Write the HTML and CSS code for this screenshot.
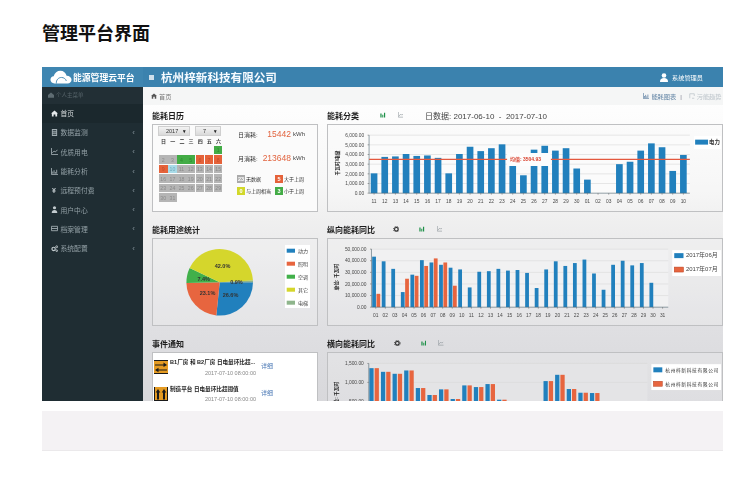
FILE: index.html
```html
<!DOCTYPE html>
<html lang="zh-CN">
<head>
<meta charset="utf-8">
<title>管理平台界面</title>
<link rel="stylesheet" href="styles.css">
</head>
<body>
<h1 class="page-title">管理平台界面</h1>
<div class="shot">
  <header class="topbar">
    <div class="brand">
      <svg class="cloud" viewBox="0 0 24 15"><path d="M5 14.5C2 14.5 .5 12.7 .5 10.6 .5 8.5 2 7 4 6.8 5 3 8 .8 11.3 .8c3.5 0 6 2.300 6.800 5.200 3.200 0 5.400 2 5.400 4.500 0 2.300-1.800 4-4.300 4z" fill="#fff"/><path d="M7 14.500c-.5-3.500 2-6.500 5.500-6.500 2.600 0 4.600 1.500 5.300 3.800" fill="none" stroke="#3d84af" stroke-width="1"/></svg>
      <span>能源管理云平台</span>
    </div>
    <div class="topbar-main">
      <span class="burger"></span>
      <span class="company">杭州梓新科技有限公司</span>
      <span class="user">
        <svg class="user-icon" viewBox="0 0 8 9"><circle cx="4" cy="2.500" r="2.300" fill="#fff"/><path d="M0 9c0-3 1.500-4 4-4s4 1 4 4z" fill="#fff"/></svg>
        系统管理员
      </span>
    </div>
  </header>
  <div class="body-row">
    <nav class="sidebar">
      <div class="side-head">
        <svg class="nav-icon small" viewBox="0 0 8 8"><path d="M0 4 4 .5 8 4v3.500H0z" fill="#5e6c72"/></svg>
        个人主菜单
      </div>
      <a class="nav-item active"><svg class="nav-icon" viewBox="0 0 8 8"><path d="M0 4 4 .5 8 4H7v3.500H5V5H3v2.500H1V4z" fill="#e4e8ea"/></svg><span>首页</span></a>
      <a class="nav-item"><svg class="nav-icon" viewBox="0 0 8 8"><path d="M1 0h6v8H1zM2 1.500v1h4v-1zM2 4v.8h4V4zm0 2v.8h4V6z" fill="#a3aeb3" fill-rule="evenodd"/></svg><span>数据监测</span><i class="chev">‹</i></a>
      <a class="nav-item"><svg class="nav-icon" viewBox="0 0 8 8"><path d="M.5 0v7.500H8M1.500 5.500l2-2 1.500 1L7.500 2" fill="none" stroke="#a3aeb3"/></svg><span>优质用电</span><i class="chev">‹</i></a>
      <a class="nav-item"><svg class="nav-icon" viewBox="0 0 8 8"><path d="M.5 0v7.500H8M2 6.500V4M3.500 6.500V2.500M5 6.500V4.500M6.500 6.500V2" fill="none" stroke="#a3aeb3"/></svg><span>能耗分析</span><i class="chev">‹</i></a>
      <a class="nav-item"><span class="yen">¥</span><span>远程预付费</span><i class="chev">‹</i></a>
      <a class="nav-item"><svg class="nav-icon" viewBox="0 0 8 8"><circle cx="4" cy="2" r="1.800" fill="#c3cbcf"/><path d="M.8 8c0-2.500 1.200-3.500 3.200-3.500S7.200 5.500 7.200 8z" fill="#c3cbcf"/></svg><span>用户中心</span><i class="chev">‹</i></a>
      <a class="nav-item"><svg class="nav-icon" viewBox="0 0 8 8"><path d="M.5 1.500h7v5h-7zM.5 4h7" fill="none" stroke="#a3aeb3"/></svg><span>档案管理</span><i class="chev">‹</i></a>
      <a class="nav-item"><svg class="nav-icon" viewBox="0 0 8 8"><circle cx="3" cy="4.500" r="1.900" fill="none" stroke="#c3cbcf" stroke-width="1.300"/><circle cx="6.500" cy="2" r="1.100" fill="none" stroke="#c3cbcf"/><circle cx="6.500" cy="6.500" r="1" fill="none" stroke="#c3cbcf"/></svg><span>系统配置</span><i class="chev">‹</i></a>
    </nav>
    <main class="content">
      <div class="crumbs">
        <span class="crumb-home"><svg class="crumb-icon" viewBox="0 0 8 8"><path d="M0 4 4 .5 8 4H7v3.500H5V5H3v2.500H1V4z" fill="#555"/></svg>首页</span>
        <span class="crumb-tools">
          <svg class="crumb-icon" viewBox="0 0 8 8"><path d="M.5 0v7.500H8M2 6.500V4M3.500 6.500V2.500M5 6.500V4.500M6.500 6.500V2" fill="none" stroke="#5f82a3"/></svg>
          <span class="tool-on">能耗图表</span><span class="tool-sep">|</span>
          <svg class="crumb-icon" viewBox="0 0 8 8"><path d="M1 7V1h6v3M4 7h3" fill="none" stroke="#bcc4ca"/></svg>
          <span class="tool-off">污能趋势</span>
        </span>
      </div>
      <div class="board">
        <section class="sec">
          <div class="sec-head"><h2>能耗日历</h2></div>
          <div class="panel calendar-panel">
            <div class="cal">
              <div class="cal-selects">
                <span class="sel sel-year">2017<b>▾</b></span>
                <span class="sel sel-month">7<b>▾</b></span>
              </div>
              <div class="cal-week"><span>日</span><span>一</span><span>二</span><span>三</span><span>四</span><span>五</span><span>六</span></div>
              <div class="cal-grid">
                <span class="blank"></span><span class="blank"></span><span class="blank"></span><span class="blank"></span><span class="blank"></span><span class="blank"></span><span class="g">1</span>
                <span>2</span><span>3</span><span class="g">4</span><span class="g">5</span><span class="o">6</span><span class="o">7</span><span class="o">8</span>
                <span class="o">9</span><span class="today">10</span><span>11</span><span>12</span><span>13</span><span>14</span><span>15</span>
                <span>16</span><span>17</span><span>18</span><span>19</span><span>20</span><span>21</span><span>22</span>
                <span>23</span><span>24</span><span>25</span><span>26</span><span>27</span><span>28</span><span>29</span>
                <span>30</span><span>31</span>
              </div>
            </div>
            <div class="cal-side">
              <div class="stat"><span class="stat-label">日消耗:</span><span class="stat-val">15442</span><span class="stat-unit">kWh</span></div>
              <div class="stat"><span class="stat-label">月消耗:</span><span class="stat-val">213648</span><span class="stat-unit">kWh</span></div>
              <div class="keys">
                <span class="key"><b class="sw-gray">23</b>无数据</span>
                <span class="key"><b class="sw-orange">5</b>大于上周</span>
                <span class="key"><b class="sw-yellow">0</b>与上周相当</span>
                <span class="key"><b class="sw-green">3</b>小于上周</span>
              </div>
            </div>
          </div>
        </section>
        <section class="sec">
          <div class="sec-head">
            <h2>能耗分类</h2>
            <svg class="ico ico-a" viewBox="0 0 8 8"><path d="M.5 8V2h1.800v6zM3.300 8V4h1.500v4zM5.800 8V1h1.700v7z" fill="#1f9149"/></svg>
            <svg class="ico ico-b" viewBox="0 0 8 8"><path d="M.5 0v7.500H8M1.500 6l2.500-3 1.500 1.500L7.500 3" fill="none" stroke="#8d969b" stroke-width=".9"/></svg>
            <span class="range">日数据: 2017-06-10 &nbsp;-&nbsp; 2017-07-10</span>
          </div>
          <div class="panel"><svg id="chart-type" class="chart" viewBox="328 125 396 86"></svg></div>
        </section>
        <section class="sec">
          <div class="sec-head"><h2>能耗用途统计</h2></div>
          <div class="panel"><svg id="chart-pie" class="chart" viewBox="153 239 164 86"></svg></div>
        </section>
        <section class="sec">
          <div class="sec-head">
            <h2>纵向能耗同比</h2>
            <svg class="gear gear-v" viewBox="0 0 10 10"><circle cx="5" cy="5" r="2.700" fill="none" stroke="#222" stroke-width="1.600"/><circle cx="5" cy="5" r="4.200" fill="none" stroke="#222" stroke-width="1.400" stroke-dasharray="1.600 1.700"/></svg>
            <svg class="ico ico-v" viewBox="0 0 8 8"><path d="M.5 8V2h1.800v6zM3.300 8V4h1.500v4zM5.800 8V1h1.700v7z" fill="#1f9149"/></svg>
            <svg class="ico ico-b" viewBox="0 0 8 8"><path d="M.5 0v7.500H8M1.500 6l2.500-3 1.500 1.500L7.500 3" fill="none" stroke="#8d969b" stroke-width=".9"/></svg>
          </div>
          <div class="panel"><svg id="chart-month" class="chart" viewBox="328 239 396 86"></svg></div>
        </section>
        <section class="sec">
          <div class="sec-head"><h2>事件通知</h2></div>
          <div class="panel events">
            <div class="event">
              <svg class="ev-icon" viewBox="0 0 14 14"><rect width="14" height="14" fill="#e59b22"/><path d="M0 .5h14M0 13.500h14" stroke="#1a1a1a"/><path d="M1 4.500h8.500V2.500L13 5 9.500 7V5.500H1zM13 9.500H4.500V7.800L1 10l3.500 2.300v-1.800H13z" fill="#1a1a1a"/></svg>
              <div class="ev-text"><b>B1厂房 和 B2厂房 日电量环比超...</b><time>2017-07-10 08:00:00</time></div>
              <a class="ev-link">详细</a>
            </div>
            <div class="event">
              <svg class="ev-icon" viewBox="0 0 14 14"><rect width="14" height="14" fill="#e59b22"/><path d="M.5 0v14M13.500 0v14M0 13.500h14" stroke="#1a1a1a"/><path d="M4 2 6.300 5.500H5v7H3v-7H1.700zM10 2l2.300 3.500H11v7H9v-7H7.700z" fill="#1a1a1a"/></svg>
              <div class="ev-text"><b>制造平台 日电量环比超阈值</b><time>2017-07-10 08:00:00</time></div>
              <a class="ev-link">详细</a>
            </div>
          </div>
        </section>
        <section class="sec">
          <div class="sec-head">
            <h2>横向能耗同比</h2>
            <svg class="gear gear-h" viewBox="0 0 10 10"><circle cx="5" cy="5" r="2.700" fill="none" stroke="#222" stroke-width="1.600"/><circle cx="5" cy="5" r="4.200" fill="none" stroke="#222" stroke-width="1.400" stroke-dasharray="1.600 1.700"/></svg>
            <svg class="ico ico-v" viewBox="0 0 8 8"><path d="M.5 8V2h1.800v6zM3.300 8V4h1.500v4zM5.800 8V1h1.700v7z" fill="#1f9149"/></svg>
            <svg class="ico ico-b" viewBox="0 0 8 8"><path d="M.5 0v7.500H8M1.500 6l2.500-3 1.500 1.500L7.500 3" fill="none" stroke="#8d969b" stroke-width=".9"/></svg>
          </div>
          <div class="panel"><svg id="chart-company" class="chart" viewBox="328 353 396 86"></svg></div>
        </section>
      </div>
    </main>
  </div>
</div>
<div class="footer-band"></div>
<script src="charts.js"></script>
</body>
</html>
```

FILE: styles.css
```css
* { box-sizing: border-box; }
html, body { margin: 0; padding: 0; }
body {
  background: #fff;
  width: 750px;
  height: 493px;
  overflow: hidden;
  padding: 23px 27px 0 42px;
  font-family: "Liberation Sans", "Noto Sans CJK SC", sans-serif;
}
.page-title {
  margin: 0 0 22px;
  font-size: 18px;
  line-height: 22px;
  font-weight: 700;
  color: #111;
}
.shot {
  width: 681px;
  height: 333.500px;
  overflow: hidden;
  background: #fff;
  filter: blur(.3px);
  display: flex;
  flex-direction: column;
}
.footer-band {
  margin-top: 10px;
  height: 40px;
  background: #f4f2f4;
  border-bottom: 1px solid #ebe9eb;
}

/* top bar */
.topbar { display: flex; height: 20px; flex: none; color: #fff; background: #3b82ae; }
.brand {
  width: 101px;
  display: flex;
  align-items: center;
  padding-left: 8px;
  background: #3f86b1;
  font-size: 8.800px;
  font-weight: 700;
}
.cloud { width: 22px; height: 14px; margin-right: 1px; flex: none; }
.topbar-main { flex: 1; display: flex; align-items: center; padding-left: 6px; }
.burger { width: 5px; height: 5px; background: #cfe0ec; margin-right: 7px; }
.company { font-size: 11.600px; font-weight: 700; color: #f6fbff; }
.user { margin-left: auto; margin-right: 20px; display: flex; align-items: center; font-size: 6.200px; color: #fff; }
.user-icon { width: 8px; height: 9px; margin-right: 4px; }

.body-row { flex: 1; display: flex; min-height: 0; }

/* sidebar */
.sidebar { width: 101px; flex: none; background: #1f2d33; color: #93a0a6; font-size: 6.800px; }
.side-head {
  height: 16.500px;
  display: flex;
  align-items: center;
  padding-left: 6px;
  font-size: 5.500px;
  color: #56646a;
  background: #222f35;
}
.nav-item { height: 19.300px; display: flex; align-items: center; padding-left: 8.500px; }
.nav-item.active { color: #d5dadc; background: #1b282d; }
.nav-icon { width: 7px; height: 7px; margin-right: 3px; flex: none; }
.nav-icon.small { width: 6px; height: 6px; margin-right: 2px; }
.yen { width: 7px; margin-right: 3px; text-align: center; color: #c3cbcf; font-size: 7px; font-weight: 700; }
.chev { margin-left: auto; margin-right: 8px; font-style: normal; font-size: 8px; color: #84929a; }

/* content */
.content {
  flex: 1;
  min-width: 0;
  display: flex;
  flex-direction: column;
  background: linear-gradient(#fff 0, #f7f7f7 30%, #f0f0f0 41%, #dfdfe2 77%, #d8d8db 100%);
}
.crumbs {
  height: 18px;
  flex: none;
  display: flex;
  align-items: center;
  justify-content: space-between;
  padding: 0 1.500px 0 8px;
  background: #f5f6f6;
  font-size: 6.200px;
  color: #777;
}
.crumb-home, .crumb-tools { display: flex; align-items: center; }
.crumb-icon { width: 6px; height: 6px; margin-right: 2px; flex: none; }
.tool-on { color: #5f82a3; }
.tool-sep { margin: 0 7px 0 4px; color: #778; }
.tool-off { color: #bcc4ca; }
.board {
  display: grid;
  grid-template-columns: 166px 396px;
  column-gap: 9px;
  row-gap: 8px;
  padding: 1px 0 0 9px;
  grid-auto-rows: 106px;
}
.sec { min-width: 0; }
.sec-head { height: 18px; display: flex; align-items: center; }
.sec-head h2 { margin: 0; font-size: 8px; font-weight: 700; color: #1c1c1c; }
.panel {
  height: 88px;
  border: 1px solid #bfc0c2;
  background: rgba(250, 250, 250, .2);
  overflow: hidden;
}
.chart { display: block; width: 100%; height: 100%; }
.ico { width: 5.500px; height: 5.500px; flex: none; }
.ico-a { margin-left: 21px; }
.ico-b { margin-left: 12px; }
.ico-v { margin-left: 20px; }
.gear { width: 6.700px; height: 6.700px; flex: none; margin-left: 17.500px; }
.gear-h { margin-left: 19px; }
.range { margin-left: 22px; font-size: 8px; color: #444; }

/* calendar */
.calendar-panel { display: flex; padding: 1px 0 0 5px; background: #fbfbfb; }
.cal { width: 64px; flex: none; }
.cal-selects { display: flex; height: 10px; gap: 5px; width: 63px; }
.sel {
  display: flex;
  align-items: center;
  justify-content: space-between;
  padding: 0 3px 0 7px;
  background: linear-gradient(#f3f3f3, #d9d9d9);
  border: 1px solid #cfcfcf;
  font-size: 5.500px;
  color: #333;
}
.sel b { font-size: 5px; color: #222; }
.sel-year { width: 32px; }
.sel-month { width: 26px; }
.cal-week { display: grid; grid-template-columns: repeat(7, 9.170px); height: 9.700px; margin-left: 1px; font-size: 5px; color: #333; align-items: center; justify-items: center; font-weight: 700; }
.cal-grid { display: grid; grid-template-columns: repeat(7, 8.500px); grid-auto-rows: 8.800px; column-gap: .670px; row-gap: .700px; margin-left: 1px; }
.cal-grid span { display: flex; align-items: center; justify-content: center; background: #b5b5b5; color: #8b8b8b; font-size: 5.200px; }
.cal-grid .blank { background: none; }
.cal-grid .g { background: #43ac46; color: #2d8c30; }
.cal-grid .o { background: #e5623a; color: #c44d29; }
.cal-grid .today { background: #a9dbe8; color: #6fa9b9; }
.cal-side { margin-left: 15px; width: 74px; padding-top: 1px; }
.stat { display: flex; align-items: center; height: 14px; width: 70px; margin-bottom: 10px; font-size: 6px; color: #333; }
.stat-label { flex: 1; padding-left: 1px; }
.stat-val { font-size: 8.500px; color: #e2643f; }
.stat-unit { width: 14px; margin-left: 2px; color: #444; }
.keys { display: grid; grid-template-columns: 38px 36px; grid-auto-rows: 9px; row-gap: 3px; margin-top: -1px; }
.key { display: flex; align-items: center; font-size: 5px; color: #333; white-space: nowrap; }
.key b { width: 8px; height: 8px; margin-right: 1px; display: flex; align-items: center; justify-content: center; font-size: 5.500px; color: #fff; flex: none; }
.sw-gray { background: #aaa; }
.sw-orange { background: #e5623a; }
.sw-yellow { background: #d2d82a; }
.sw-green { background: #43ac46; }

/* events */
.events { background: #fff; padding: 6px 2px 0 1px; }
.event { display: flex; height: 26.500px; align-items: flex-start; }
.ev-icon { width: 14px; height: 14px; margin-top: 1px; flex: none; }
.ev-text { width: 86px; margin-left: 2px; display: flex; flex-direction: column; margin-top: -1px; }
.ev-text b { font-size: 5.600px; line-height: 8px; color: #1d1d1d; white-space: nowrap; }
.ev-text time { font-size: 5.500px; line-height: 8px; margin-top: 2.500px; color: #888; text-align: right; }
.ev-link { margin: 2px 0 0 5px; font-size: 6px; color: #4a78b5; }

/* chart text */
.tick { font-size: 4.900px; fill: #4a4a4a; }
.axis-title { font-size: 4.800px; font-weight: 700; fill: #222; }
.legend-text { font-size: 5px; fill: #444; }
.legend-date { font-size: 6px; fill: #444; }
.legend-strong { font-size: 5.500px; font-weight: 700; fill: #333; }
.legend-spaced { font-size: 4.800px; letter-spacing: .6px; fill: #333; }
.avg-label { font-size: 5px; font-weight: 700; fill: #d9402c; }
.pie-label { font-size: 5.500px; font-weight: 700; fill: #333; text-anchor: middle; }
```

FILE: charts.js
```js
(function () {
  var NS = 'http://www.w3.org/2000/svg';
  var BLUE = '#2180bd', ORANGE = '#e7653f';

  function add(svg, tag, attrs, text) {
    var el = document.createElementNS(NS, tag);
    for (var k in attrs) el.setAttribute(k, attrs[k]);
    if (text != null) el.textContent = text;
    svg.appendChild(el);
    return el;
  }
  function money(v) {
    return v.toLocaleString('en-US', { minimumFractionDigits: 2, maximumFractionDigits: 2 });
  }
  function pad(n) { return (n < 10 ? '0' : '') + n; }

  function barChart(id, c) {
    var svg = document.getElementById(id);
    var yOf = function (v) { return c.y0 - v * c.scale; };
    var top = yOf(c.max);
    add(svg, 'rect', { x: c.x0, y: top, width: c.x1 - c.x0, height: c.y0 - top, fill: c.plot });
    for (var v = 0; v <= c.max; v += c.step) {
      var y = yOf(v);
      if (v) add(svg, 'line', { x1: c.x0, x2: c.x1, y1: y, y2: y, stroke: '#d9d9d9', 'stroke-width': .6 });
      add(svg, 'line', { x1: c.x0 - 1.500, x2: c.x0, y1: y, y2: y, stroke: '#555', 'stroke-width': .5 });
      add(svg, 'text', { x: c.x0 - 5, y: y + 1.700, 'text-anchor': 'end', 'class': 'tick' }, money(v));
    }
    c.series.forEach(function (s) {
      s.values.forEach(function (val, i) {
        if (!val) return;
        add(svg, 'rect', { x: s.first + i * c.dx - c.barW / 2, y: yOf(val), width: c.barW, height: val * c.scale, fill: s.color });
      });
    });
    add(svg, 'path', { d: 'M' + c.x0 + ' ' + top + 'V' + c.y0 + 'H' + c.x1, fill: 'none', stroke: '#4c6470', 'stroke-width': .6 });
    c.labels.forEach(function (t, i) {
      var x = c.labelFirst + i * c.dx;
      add(svg, 'line', { x1: x, x2: x, y1: c.y0, y2: c.y0 + 1.500, stroke: '#555', 'stroke-width': .5 });
      add(svg, 'text', { x: x, y: c.y0 + 9.500, 'text-anchor': 'middle', 'class': 'tick' }, t);
    });
    var tx = c.titleX, ty = c.titleY;
    add(svg, 'text', { x: tx, y: ty, 'text-anchor': 'middle', transform: 'rotate(-90 ' + tx + ' ' + ty + ')', 'class': 'axis-title' }, c.title);
  }

  function legend(svg, box, items) {
    add(svg, 'rect', { x: box.x, y: box.y, width: box.w, height: box.h, fill: '#fff' });
    items.forEach(function (it) {
      add(svg, 'rect', { x: box.x + box.swatchX, y: it.y - box.swatchH / 2, width: box.swatchW, height: box.swatchH, fill: it.color, stroke: it.edge || 'none', 'stroke-width': .5 });
      add(svg, 'text', { x: box.x + box.textX, y: it.y + 1.800, 'class': box.cls }, it.text);
    });
  }

  function seq(n, start) {
    var out = [];
    for (var i = 0; i < n; i++) out.push(pad(i + start));
    return out;
  }

  /* 能耗分类 */
  var typeLabels = seq(20, 11).concat(seq(10, 1));
  barChart('chart-type', {
    x0: 369.300, x1: 691.700, y0: 193.300, scale: .00972, max: 6000, step: 1000,
    plot: '#fbfbfb', dx: 10.720, barW: 6.700, labelFirst: 374.300, labels: typeLabels,
    title: '千瓦时/电量', titleX: 339, titleY: 163,
    series: [{ color: BLUE, first: 374.300, values: [2050, 3750, 3800, 4050, 3850, 3900, 3650, 2050, 4050, 4800, 4350, 4650, 5050, 2850, 1850, 4500, 4900, 4400, 4650, 2550, 1400, 0, 0, 3000, 3250, 4400, 5150, 4750, 2300, 3950] }]
  });
  var typeSvg = document.getElementById('chart-type');
  add(typeSvg, 'line', { x1: 369.300, x2: 691.700, y1: 159.300, y2: 159.300, stroke: '#e4583e', 'stroke-width': 1.100 });
  add(typeSvg, 'rect', { x: 508, y: 153, width: 44, height: 13, rx: 1, fill: '#fdfdfd' });
  add(typeSvg, 'text', { x: 511, y: 161.200, 'class': 'avg-label' }, '均值: 3504.93');
  legend(typeSvg, { x: 696, y: 136, w: 27, h: 13, swatchX: 1, swatchW: 13, swatchH: 5, textX: 15, cls: 'legend-strong' },
    [{ y: 142, color: BLUE, text: '电力' }]);

  /* 纵向能耗同比 */
  barChart('chart-month', {
    x0: 371.700, x1: 670, y0: 307.300, scale: .001167, max: 50000, step: 10000,
    plot: '#f1f1f2', dx: 9.610, barW: 3.800, labelFirst: 376, labels: seq(31, 1),
    title: '单位: 千瓦时', titleX: 338, titleY: 277,
    series: [
      { color: BLUE, first: 374.300, values: [43500, 39500, 33000, 13000, 28000, 40500, 38500, 36500, 34000, 32500, 17000, 30500, 31000, 33000, 31500, 32000, 29500, 16500, 32500, 39500, 35500, 38000, 41000, 29000, 15000, 36500, 40000, 36000, 38000, 21000, 0] },
      { color: ORANGE, first: 378.600, values: [11500, 0, 0, 24500, 27000, 35500, 42000, 38500, 18500] }
    ]
  });
  legend(document.getElementById('chart-month'), { x: 674, y: 250, w: 49, h: 26, swatchX: 2, swatchW: 9.300, swatchH: 5, textX: 13.700, cls: 'legend-date' },
    [{ y: 255.500, color: BLUE, text: '2017年06月' }, { y: 269.500, color: ORANGE, edge: '#b8401f', text: '2017年07月' }]);

  /* 横向能耗同比 */
  var groupsA = [1376, 1279, 1227, 1315, 850, 666, 815, 560, 920, 876, 955, 542, 0, 0, 0, 1034, 1200, 824, 726, 718];
  barChart('chart-company', {
    x0: 369, x1: 649, y0: 420.300, scale: .038, max: 1500, step: 500,
    plot: '#e4e4e6', dx: 11.670, barW: 4.300, labelFirst: 374.300, labels: [],
    title: '单位: 千瓦时', titleX: 338, titleY: 395,
    series: [
      { color: BLUE, first: 371.700, values: groupsA },
      { color: ORANGE, first: 377, values: groupsA }
    ]
  });
  legend(document.getElementById('chart-company'), { x: 653, y: 364, w: 70, h: 26, swatchX: 2, swatchW: 9, swatchH: 5, textX: 14, cls: 'legend-spaced' },
    [{ y: 369.700, color: BLUE, text: '杭州梓新科技有限公司' }, { y: 383.700, color: ORANGE, edge: '#b8401f', text: '杭州梓新科技有限公司' }]);

  /* 能耗用途统计 */
  var pie = document.getElementById('chart-pie');
  var cx = 219.700, cy = 282.300, r = 33.300;
  var slices = [
    { to: 95.800, color: BLUE },
    { to: 179, color: ORANGE },
    { to: 205.600, color: '#41b04a' },
    { to: 356.800, color: '#d5d62c' },
    { to: 360, color: '#8fb58c' }
  ];
  var from = 0;
  slices.forEach(function (s) {
    var a0 = from * Math.PI / 180, a1 = s.to * Math.PI / 180;
    var d = 'M' + cx + ' ' + cy + 'L' + (cx + r * Math.cos(a0)) + ' ' + (cy + r * Math.sin(a0)) +
      'A' + r + ' ' + r + ' 0 ' + (s.to - from > 180 ? 1 : 0) + ' 1 ' + (cx + r * Math.cos(a1)) + ' ' + (cy + r * Math.sin(a1)) + 'Z';
    add(pie, 'path', { d: d, fill: s.color });
    from = s.to;
  });
  [['42.0%', 222.500, 267.500], ['7.4%', 203.700, 280.500], ['0.9%', 236.500, 283.500], ['23.1%', 207.500, 295], ['26.6%', 230.500, 296.500]].forEach(function (p) {
    add(pie, 'text', { x: p[1], y: p[2], 'class': 'pie-label' }, p[0]);
  });
  legend(pie, { x: 285, y: 245, w: 25, h: 63, swatchX: 1.700, swatchW: 8.300, swatchH: 4, textX: 13, cls: 'legend-text' }, [
    { y: 250.700, color: BLUE, text: '动力' },
    { y: 263.700, color: ORANGE, text: '照明' },
    { y: 276.700, color: '#41b04a', text: '空调' },
    { y: 289.700, color: '#d5d62c', text: '其它' },
    { y: 302.700, color: '#8fb58c', text: '电梯' }
  ]);
})();
```
